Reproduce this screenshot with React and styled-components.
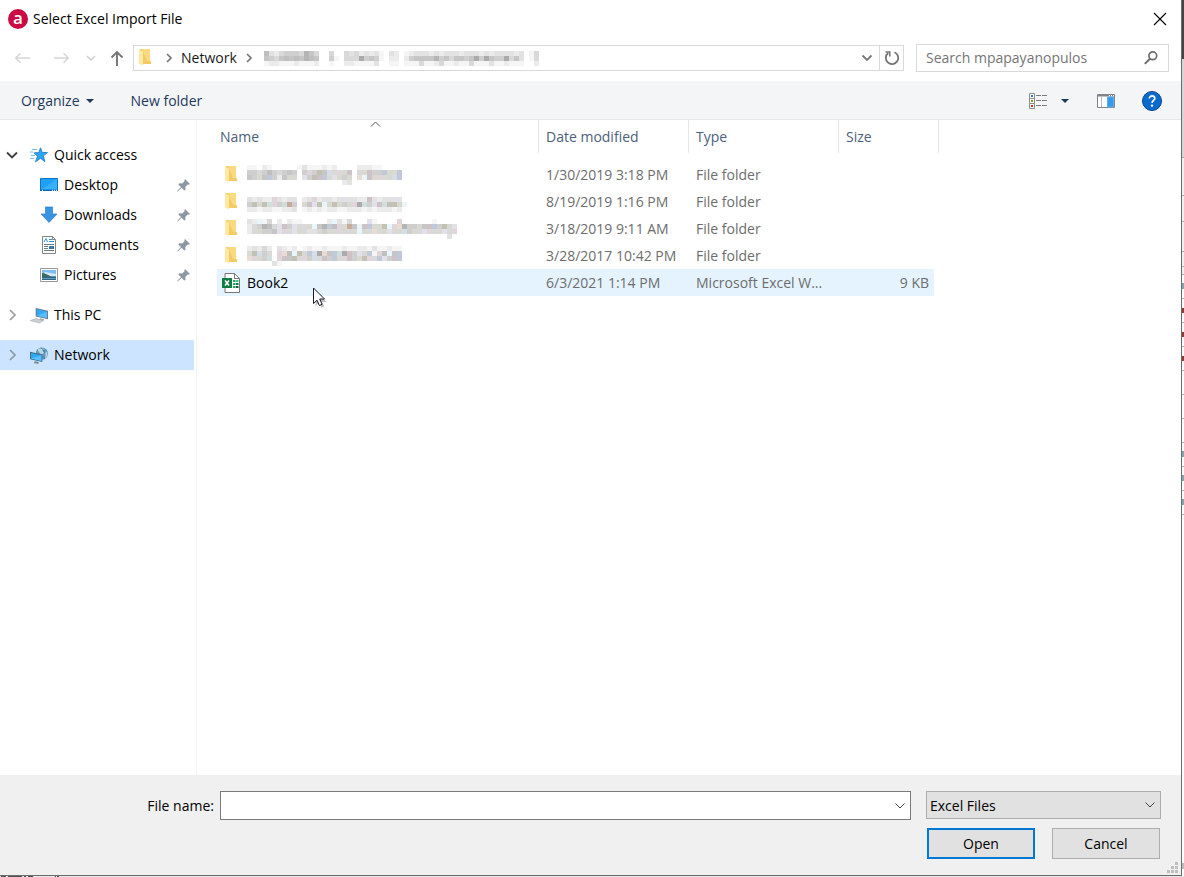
import { useState } from "react";
import styled, { createGlobalStyle } from "styled-components";

const GlobalStyle = createGlobalStyle`
  * {
    box-sizing: border-box;
  }

  body {
    margin: 0;
    background: #fff;
  }

  body, button, input, select, table {
    font-family: "Open Sans", "Noto Sans", sans-serif;
    font-size: 14px;
    line-height: 20px;
    color: #000;
  }

  button {
    border: 0;
    padding: 0;
    background: none;
  }

  svg {
    display: block;
    flex-shrink: 0;
  }
`;

const Screen = styled.div`
  display: grid;
  grid-template-columns: minmax(0, 1fr) 2px;
  grid-template-rows: 1fr 1px;
  min-height: 100vh;
`;

const Dialog = styled.div`
  display: flex;
  flex-direction: column;
  background: #fff;
  border-right: 1px solid #6b6b6b;
  border-bottom: 1px solid #6b6b6b;
`;

const RightEdge = styled.div`
  overflow: hidden;
  background: #fff;
`;

const BottomEdge = styled.div`
  grid-column: 1 / -1;
  overflow: hidden;
  background: #e6e6e6;
`;

const TitleBar = styled.header`
  display: flex;
  align-items: center;
  height: 35px;
  padding: 2px 14px 0 8px;

  h1 {
    flex: 1;
    margin: 0 0 0 5px;
    font-size: 14px;
    font-weight: 400;
  }
`;

const Logo = styled.span`
  display: flex;
  justify-content: center;
  width: 20px;
  height: 20px;
  border-radius: 50%;
  background: #cb0a44;
  color: #fff;
  font-weight: 600;
  font-size: 17px;
  line-height: 17px;
`;

const NavBar = styled.div`
  display: flex;
  align-items: center;
  height: 46px;
  padding: 0 12px 0 14px;
`;

const NavButtons = styled.div`
  display: flex;
  align-items: center;
  width: 119px;

  button:nth-child(2) {
    margin-left: 22px;
  }
  button:nth-child(3) {
    margin-left: 16px;
  }
  button:nth-child(4) {
    margin-left: 14px;
  }
`;

const AddressBar = styled.div`
  display: flex;
  align-items: stretch;
  flex: 1;
  min-width: 0;
  height: 26px;
  border: 1px solid #d9d9d9;
`;

const Crumbs = styled.nav`
  display: flex;
  align-items: center;
  flex: 1;
  min-width: 0;
  overflow: hidden;
  padding-left: 2px;

  a {
    color: #1a1a1a;
    text-decoration: none;
    margin: 0 9px;
  }
  svg + svg {
    margin-left: 12px;
  }
`;

const AddressButton = styled.button`
  display: flex;
  align-items: center;
  justify-content: center;
  width: 24px;
  border-left: ${({ $divided }) => ($divided ? "1px solid #d9d9d9" : "0")};
`;

const SearchBox = styled.label`
  display: flex;
  align-items: center;
  width: 253px;
  height: 28px;
  margin-left: 12px;
  padding: 0 10px 0 9px;
  border: 1px solid #d9d9d9;

  input {
    flex: 1;
    min-width: 0;
    padding: 0;
    border: 0;
    outline: 0;
  }
  input::placeholder {
    color: #757575;
    opacity: 1;
  }
`;

const CommandBar = styled.div`
  display: flex;
  align-items: center;
  height: 39px;
  padding: 1px 19px 0 21px;
  background: #f4f5f7;
  border-bottom: 1px solid #e6e7e9;
`;

const Command = styled.button`
  display: flex;
  align-items: center;
  gap: 6px;
  margin-right: ${({ $after }) => $after || 0}px;
  color: #1e395b;
`;

const Spacer = styled.div`
  flex: 1;
`;

const Main = styled.main`
  display: flex;
  flex: 1;
`;

const Sidebar = styled.nav`
  width: 197px;
  padding: 20px 2px 0 0;
  border-right: 1px solid #f3f3f3;
`;

const SideGroup = styled.div`
  margin-bottom: 10px;
`;

const SideItem = styled.a`
  display: flex;
  align-items: center;
  height: 30px;
  padding: 0 4px 0 ${({ $nested }) => ($nested ? 40 : 6)}px;
  background: ${({ $selected }) => ($selected ? "#cce4ff" : "transparent")};
  color: #000;
  text-decoration: none;

  span {
    flex: 1;
    margin-left: 6px;
  }
`;

const Arrow = styled.svg`
  margin-right: 12px;
`;

const FileArea = styled.section`
  flex: 1;
  min-width: 0;
  padding-left: 20px;
`;

const FileTable = styled.table`
  width: 722px;
  table-layout: fixed;
  border-collapse: separate;
  border-spacing: 0;

  th {
    position: relative;
    height: 33px;
    padding: 0 7px;
    border-right: 1px solid #e5e5e5;
    color: #4c607a;
    font-weight: 400;
    text-align: left;
  }
  th:first-child {
    padding-left: 3px;
  }
  thead::after {
    content: "";
    display: block;
    height: 8px;
  }
`;

const SortMark = styled.svg`
  position: absolute;
  top: 1px;
  left: 153px;
`;

const FileRow = styled.tr`
  background: ${({ $hover }) => ($hover ? "#e5f3ff" : "transparent")};

  td {
    height: 27px;
    padding: 0 7px;
    color: #6d6d6d;
    white-space: nowrap;
  }
  td:first-child {
    padding: 0 0 0 5px;
    color: #000;
  }
  td:nth-child(4) {
    padding-right: 5px;
    text-align: right;
  }
  td:last-child {
    padding: 0;
    background: #fff;
  }
`;

const FileName = styled.div`
  position: relative;
  display: flex;
  align-items: center;
  gap: 7px;
`;

const Pointer = styled.svg`
  position: absolute;
  left: 91px;
  top: 14px;
`;

const Footer = styled.footer`
  padding: 16px 20px;
  background: #f0f0f0;
`;

const FieldRow = styled.div`
  display: flex;
  align-items: flex-start;

  > label {
    width: 214px;
    margin: 5px 6px 0 -20px;
    text-align: right;
  }
`;

const ComboBox = styled.div`
  display: flex;
  flex: 1;
  min-width: 0;
  height: 29px;
  border: 1px solid #7a7a7a;
  background: #fff;

  input {
    flex: 1;
    min-width: 0;
    padding: 0 4px;
    border: 0;
    outline: 0;
    background: none;
  }
  button {
    padding: 0 4px;
  }
`;

const TypeSelect = styled.div`
  position: relative;
  width: 235px;
  margin-left: 15px;

  select {
    appearance: none;
    width: 100%;
    height: 28px;
    padding: 1px 24px 0 3px;
    border: 1px solid #adadad;
    border-radius: 0;
    background: #e1e1e1;
  }
  svg {
    position: absolute;
    top: 8px;
    right: 5px;
    pointer-events: none;
  }
`;

const Actions = styled.div`
  position: relative;
  display: flex;
  justify-content: flex-end;
  gap: 17px;
  margin-top: 8px;
  padding-right: 1px;
`;

const DialogButton = styled.button`
  width: 108px;
  height: 31px;
  border: ${({ $primary }) => ($primary ? "2px solid #0078d7" : "1px solid #adadad")};
  background: #e1e1e1;
`;

const Grip = styled.svg`
  position: absolute;
  right: -17px;
  bottom: -14px;
`;

const shades = {
  1: "#f5f5f5",
  2: "#ebebeb",
  3: "#e2e2e2",
  4: "#d9d9d9",
  5: "#cfcfcf",
  6: "#c6c6c6",
  7: "#bfbfbf",
  8: "#b5b5b5",
  9: "#ababab",
  p: "#dfd5da",
  q: "#cfc2c7",
  b: "#d5dde8",
  v: "#c0c8da",
  g: "#d8dad2",
  h: "#c3c1b4",
  t: "#d0dfdc",
  c: "#e8f5fa",
  o: "#eadcd3",
  r: "#c6ac9f",
  l: "#e2e0ea",
};

// pixelated name, one character per 5px cell
const Mosaic = ({ rows }) => (
  <svg width={rows[0].length * 5} height={rows.length * 5} shapeRendering="crispEdges" aria-hidden="true">
    {rows.map((row, y) =>
      [...row].map((c, x) =>
        shades[c] ? <rect key={`${x}-${y}`} x={x * 5} y={y * 5} width="5" height="5" fill={shades[c]} /> : null
      )
    )}
  </svg>
);

const pathMosaic = [
  "73245554864..4..43423231.32.123332323332333232333323.14",
  "65467676876..51.44495651.22.256666856466569596559463.14",
  "12211121112..1..2211113..11.111411241121141113112111..2",
];

const files = [
  {
    mosaic: [
      "11.21.....13111212....22211....",
      "5545754565.5p5h6b4pgq.4gq55vggv",
      "65g6v526gg.l5hqv43g5g.ocqgp4gbv",
      "...................23..........",
    ],
    date: "1/30/2019 3:18 PM",
    type: "File folder",
  },
  {
    mosaic: [
      "................................",
      "32322p3233.23p23323l3322q3233l3.",
      "5hghtp5tr5.gqlhcghg5gp9t5lqthhgc",
      "2212211223.12121221122212122212.",
    ],
    date: "8/19/2019 1:16 PM",
    type: "File folder",
  },
  {
    mosaic: [
      "32c14.2.211.....2c314...l1....p......1....",
      "245874lq5l44gc68v7pgr6cqvgghcpo855g6qv5hgl",
      "24g556lp4lg433g5g4pg4gcg4oggl4gb5g4lp4gl4p",
      "........................................3.",
    ],
    date: "3/18/2019 9:11 AM",
    type: "File folder",
  },
  {
    mosaic: [
      "23242.3212.12112111211221311211",
      "ghb54.po7chgvb9o6vt9q5lgv1p7c6v",
      "opg5t.pq6h4p5b4q5vgpq5ghp4vl5qv",
      ".....31........................",
    ],
    date: "3/28/2017 10:42 PM",
    type: "File folder",
  },
  { name: "Book2", date: "6/3/2021 1:14 PM", type: "Microsoft Excel W...", size: "9 KB" },
];

const FolderIcon = () => (
  <svg width="18" height="18" viewBox="0 0 18 18">
    <path d="M4 0h10v12l1 .5V15H4z" fill="#f3cb62" />
    <path d="M6 0h8v12h-3z" fill="#f9da80" />
    <path d="M3 .5l4 2V16.500L3 14.500z" fill="#ffe8a3" />
  </svg>
);

const ExcelIcon = () => (
  <svg width="18" height="20" viewBox="0 0 18 20">
    <path d="M3 .5h9.500l5 5v14H3z" fill="#fff" stroke="#777" />
    <path d="M12.500 .5v5h5" fill="none" stroke="#777" />
    <path d="M11 7h2.500v2H11zM11 10h2.500v2H11zM11 13h2.500v2H11z" fill="#21a366" />
    <path d="M14 7h2.500v2H14z" fill="#33c481" />
    <path d="M14 10h2.500v2H14z" fill="#107c41" />
    <path d="M14 13h2.500v2H14z" fill="#185c37" />
    <path d="M0 5h10v10H0z" fill="#107c41" />
    <path d="M3 7.500l4 5M7 7.500l-4 5" stroke="#fff" strokeWidth="1.600" />
  </svg>
);

const Chevron = () => (
  <svg width="6" height="10" viewBox="0 0 6 10" fill="none" stroke="#777" strokeWidth="1.700">
    <path d="M1 1l4 4-4 4" />
  </svg>
);

const DownChevron = ({ color = "#444", width = 1 }) => (
  <svg width="12" height="12" viewBox="0 0 12 12" fill="none" stroke={color} strokeWidth={width}>
    <path d="M1.500 3.500L6 8l4.500-4.500" />
  </svg>
);

const Caret = () => (
  <svg width="8" height="4" viewBox="0 0 8 4">
    <path d="M0 0h8L4 4z" fill="#1e395b" />
  </svg>
);

const PinIcon = () => (
  <svg width="13" height="13" viewBox="0 0 13 13">
    <path d="M8 0l5 5-1.500.7-.8-.3-2.400 2.500.2 2.800-1.200.8-2.700-2.800L.7 12.500l-.5-.5L4 8 1.300 5.500l1-1.200 2.900.2L7.700 2.100l-.4-.9z" fill="#8b98a3" />
  </svg>
);

const StarIcon = () => (
  <svg width="18" height="17" viewBox="0 0 18 17">
    <path d="M10.500.8l1.800 4.700 5.200.1-4.200 3.200 1.700 5.700-4.600-3.100-4.900 3.400 1.900-5.500L4 5.800l4.800-.2z" fill="#2da4f5" stroke="#1878c8" strokeWidth=".8" />
    <path d="M2 2.500h5M0 5h3M1 8.500h4M0 11.500h4" stroke="#77bdec" />
  </svg>
);

const DesktopIcon = () => (
  <svg width="18" height="14" viewBox="0 0 18 14">
    <path d="M.5.5h17v12H.5z" fill="#1fa1fb" stroke="#0c74c4" />
    <path d="M1 12L17 1v11z" fill="#38b1ff" />
    <path d="M0 11.500h18V13H0z" fill="#0c69b5" />
    <path d="M2 12.300h1M12 12.300h1M14 12.300h1M16 12.300h1" stroke="#fff" />
  </svg>
);

const DownloadIcon = () => (
  <svg width="18" height="18" viewBox="0 0 18 18">
    <path d="M5.500 1h7v7H17l-8 8.500L1.200 8h4.300z" fill="#3994e4" stroke="#2b7ccc" strokeWidth=".7" />
  </svg>
);

const DocumentIcon = () => (
  <svg width="18" height="18" viewBox="0 0 18 18">
    <path d="M2.500.5h10l3 3v14h-13z" fill="#fff" stroke="#858585" />
    <path d="M12.500.5v3h3" fill="none" stroke="#858585" />
    <path d="M4 6l2-3.500L7.500 6M9 3.500h3M9 5.500h5" fill="none" stroke="#2d8fdb" />
    <path d="M4 8.500h10M4 10.500h4M4 12.500h4M4 14.500h10" stroke="#6c7780" />
    <path d="M9 10h5v3H9z" fill="#3a77b0" />
  </svg>
);

const PictureIcon = () => (
  <svg width="18" height="14" viewBox="0 0 18 14">
    <path d="M.5.5h17v13H.5z" fill="#fff" stroke="#979797" />
    <path d="M2 2h14v10H2z" fill="#7dbdf0" />
    <path d="M5 4l11 2v2H2V6z" fill="#d5eaf5" />
    <path d="M2 5c3 0 6 2 9 3.500h5V9H2z" fill="#3a6c61" />
    <path d="M2 9h14v3H2z" fill="#2d6487" />
    <path d="M2 10.500h14" stroke="#76a8c4" strokeWidth=".8" />
  </svg>
);

const ComputerIcon = () => (
  <svg width="18" height="17" viewBox="0 0 19 18">
    <path d="M6 1l13 3v9L6 10z" fill="#6d7880" />
    <path d="M7 2.200l11 2.600v7L7 9.200z" fill="#2fa8f5" />
    <path d="M7 9.200L18 4.800v7z" fill="#57bdfc" />
    <path d="M11 12l4 1-1 2-5-1z" fill="#a3abb0" />
    <path d="M0 14.500L6 12l8 2.500-4 2.500z" fill="#c9cfd2" stroke="#a6adb1" strokeWidth=".5" />
  </svg>
);

const NetworkIcon = () => (
  <svg width="18" height="17" viewBox="0 0 19 18">
    <circle cx="12.500" cy="7" r="6.500" fill="#5f9ac0" />
    <path d="M8 3c2-2 5-2 7-1l-2 2 2 2-3 2-2-2zM15 7l3-2c1 3 0 6-2 7z" fill="#b9d5df" />
    <path d="M11 1c4 1 6 6 4 12" fill="none" stroke="#3b7198" strokeWidth=".8" />
    <path d="M0 5l13 3v8L0 13z" fill="#456b86" />
    <path d="M1 6.300l11 2.500v6L1 12.200z" fill="#2ca8f5" />
    <path d="M1 12.200l11-3.400v6z" fill="#59c0fc" />
    <path d="M5 15l4 1v2l-5-1z" fill="#7d878d" />
  </svg>
);

const places = [
  { name: "Desktop", icon: <DesktopIcon /> },
  { name: "Downloads", icon: <DownloadIcon /> },
  { name: "Documents", icon: <DocumentIcon /> },
  { name: "Pictures", icon: <PictureIcon /> },
];

const edgeLines = [157, 195, 221, 251, 266, 274, 298, 322, 346, 370, 394, 418, 442, 466, 490, 514];

const App = () => {
  const [fileName, setFileName] = useState("");

  return (
    <Screen>
      <GlobalStyle />
      <Dialog role="dialog" aria-labelledby="title">
        <TitleBar>
          <Logo aria-hidden="true">a</Logo>
          <h1 id="title">Select Excel Import File</h1>
          <button aria-label="Close">
            <svg width="14" height="14" viewBox="0 0 14 14" stroke="#000" strokeWidth="1.100">
              <path d="M1 1l12 12M13 1L1 13" />
            </svg>
          </button>
        </TitleBar>

        <NavBar>
          <NavButtons>
            <button aria-label="Back">
              <svg width="17" height="12" viewBox="0 0 17 12" fill="none" stroke="#d6d6d6" strokeWidth="1.500">
                <path d="M16 6H2M6.500 1.200L1.700 6l4.800 4.800" />
              </svg>
            </button>
            <button aria-label="Forward">
              <svg width="17" height="12" viewBox="0 0 17 12" fill="none" stroke="#d6d6d6" strokeWidth="1.500">
                <path d="M1 6h14M10.500 1.200L15.300 6l-4.800 4.800" />
              </svg>
            </button>
            <button aria-label="Recent locations">
              <svg width="10" height="6" viewBox="0 0 10 6" fill="none" stroke="#d0d0d0" strokeWidth="1.500">
                <path d="M1 1l4 4 4-4" />
              </svg>
            </button>
            <button aria-label="Up">
              <svg width="14" height="16" viewBox="0 0 14 16" fill="none" stroke="#747474" strokeWidth="1.900">
                <path d="M7 16V2M1.500 7.500L7 2l5.500 5.500" />
              </svg>
            </button>
          </NavButtons>

          <AddressBar>
            <Crumbs aria-label="Address">
              <FolderIcon />
              <Chevron />
              <a href="#network">Network</a>
              <Chevron />
              <Mosaic rows={pathMosaic} />
            </Crumbs>
            <AddressButton aria-label="Previous locations">
              <DownChevron color="#777" width={1.8} />
            </AddressButton>
            <AddressButton $divided aria-label="Refresh">
              <svg width="16" height="16" viewBox="0 0 16 16" fill="none" stroke="#747474" strokeWidth="1.800">
                <path d="M10.500 2.200A6.200 6.200 0 1 1 4.200 3" />
                <path d="M1.500 2h4.300v4.500" strokeWidth="1.500" />
              </svg>
            </AddressButton>
          </AddressBar>

          <SearchBox>
            <input type="text" aria-label="Search" placeholder="Search mpapayanopulos" />
            <svg width="14" height="14" viewBox="0 0 14 14" fill="none" stroke="#6f6f6f">
              <circle cx="8.800" cy="4.800" r="3.900" strokeWidth="1.700" />
              <path d="M6 7.700L.8 12.900" strokeWidth="2" />
            </svg>
          </SearchBox>
        </NavBar>

        <CommandBar>
          <Command $after={37}>
            Organize <Caret />
          </Command>
          <Command>New folder</Command>
          <Spacer />
          <Command $after={27} aria-label="Change your view">
            <svg width="19" height="16" viewBox="0 0 19 16">
              <path d="M.5.500h5v5h-5zM.5 5.500h5v5h-5zM.5 10.500h5v5h-5z" fill="#fff" stroke="#8d8d8d" />
              <path d="M2 2h2v2H2z" fill="#2d7dc5" />
              <path d="M2 7h2v2H2z" fill="#7c9b2c" />
              <path d="M2 12h2v2H2z" fill="#cf3e24" />
              <path d="M7 2.500h5M13 2.500h5M7 7.500h5M13 7.500h5M7 12.500h5M13 12.500h5" stroke="#7d7d7d" />
            </svg>
            <svg width="16" height="4" viewBox="0 0 16 4">
              <path d="M7 0h8l-4 4z" fill="#1e395b" />
            </svg>
          </Command>
          <Command $after={27} aria-label="Show the preview pane">
            <svg width="18" height="14" viewBox="0 0 18 14">
              <path d="M.5.500h17v13H.5z" fill="#fff" stroke="#7f858b" />
              <path d="M1 1.500h16" stroke="#7f858b" strokeWidth="2" />
              <path d="M12 1.500h1M14 1.500h1M16 1.500h1" stroke="#fff" />
              <path d="M4.500 2v11" stroke="#bcbcbc" />
              <path d="M10.500 3h6v10h-6z" fill="#3b9ae8" stroke="#57b0f5" />
            </svg>
          </Command>
          <Command aria-label="Get help">
            <svg width="20" height="20" viewBox="0 0 20 20">
              <circle cx="10" cy="10" r="9.500" fill="#0a6bce" stroke="#08478d" />
              <path d="M7.300 7.600c0-3.700 5.700-3.500 5.500-.2-.1 2-2.700 2.200-2.700 4.600" fill="none" stroke="#fff" strokeWidth="1.700" />
              <circle cx="10" cy="14.600" r="1.200" fill="#fff" />
            </svg>
          </Command>
        </CommandBar>

        <Main>
          <Sidebar aria-label="Places">
            <SideGroup>
              <SideItem href="#quick">
                <Arrow width="12" height="12" viewBox="0 0 12 12" fill="none" stroke="#404040" strokeWidth="1.900">
                  <path d="M1 3.500l5 5 5-5" />
                </Arrow>
                <StarIcon />
                <span>Quick access</span>
              </SideItem>
              {places.map((place) => (
                <SideItem key={place.name} href={`#${place.name}`} $nested>
                  {place.icon}
                  <span>{place.name}</span>
                  <PinIcon />
                </SideItem>
              ))}
            </SideGroup>
            <SideGroup>
              <SideItem href="#pc">
                <Arrow width="12" height="12" viewBox="0 0 12 12" fill="none" stroke="#9c9c9c" strokeWidth="1.700">
                  <path d="M4 1l5 5-5 5" />
                </Arrow>
                <ComputerIcon />
                <span>This PC</span>
              </SideItem>
            </SideGroup>
            <SideItem href="#network" $selected>
              <Arrow width="12" height="12" viewBox="0 0 12 12" fill="none" stroke="#8c98a4" strokeWidth="1.700">
                <path d="M4 1l5 5-5 5" />
              </Arrow>
              <NetworkIcon />
              <span>Network</span>
            </SideItem>
          </Sidebar>

          <FileArea>
            <FileTable>
              <colgroup>
                <col width="322" />
                <col width="150" />
                <col width="150" />
                <col width="95" />
                <col width="5" />
              </colgroup>
              <thead>
                <tr>
                  <th>
                    Name
                    <SortMark width="11" height="6" viewBox="0 0 11 6" fill="none" stroke="#555">
                      <path d="M1 5.500L5.500 1 10 5.500" />
                    </SortMark>
                  </th>
                  <th>Date modified</th>
                  <th>Type</th>
                  <th colSpan={2}>Size</th>
                </tr>
              </thead>
              <tbody>
                {files.map((file) => (
                  <FileRow key={file.date} $hover={Boolean(file.name)}>
                    <td>
                      <FileName>
                        {file.name ? <ExcelIcon /> : <FolderIcon />}
                        {file.name || <Mosaic rows={file.mosaic} />}
                        {file.name && (
                          <Pointer width="14" height="21" viewBox="0 0 14 21">
                            <path d="M2.500 3v16l3.500-3 2.300 4.500 3-1.200L9 15h4.500z" fill="#000" opacity=".25" />
                            <path d="M.5 1v15.500L4 13.200l2.400 5.300 2.700-1.200L6.700 12h4.800z" fill="#fff" stroke="#1b1b2b" />
                          </Pointer>
                        )}
                      </FileName>
                    </td>
                    <td>{file.date}</td>
                    <td>{file.type}</td>
                    <td>{file.size}</td>
                    <td />
                  </FileRow>
                ))}
              </tbody>
            </FileTable>
          </FileArea>
        </Main>

        <Footer>
          <FieldRow>
            <label htmlFor="file-name">File name:</label>
            <ComboBox>
              <input id="file-name" type="text" value={fileName} onChange={(e) => setFileName(e.target.value)} />
              <button aria-label="Recent files">
                <DownChevron />
              </button>
            </ComboBox>
            <TypeSelect>
              <select aria-label="File type">
                <option>Excel Files</option>
              </select>
              <DownChevron />
            </TypeSelect>
          </FieldRow>
          <Actions>
            <DialogButton $primary>Open</DialogButton>
            <DialogButton>Cancel</DialogButton>
            <Grip width="11" height="11" viewBox="0 0 11 11" fill="#bfbfbf">
              <path d="M8 0h3v3H8zM4 4h3v3H4zM8 4h3v3H8zM0 8h3v3H0zM4 8h3v3H4zM8 8h3v3H8z" />
            </Grip>
          </Actions>
        </Footer>
      </Dialog>

      <RightEdge aria-hidden="true">
        <svg width="2" height="876" shapeRendering="crispEdges">
          <rect width="2" height="59" fill="#444" />
          <rect y="59" width="2" height="98" fill="#d6d6d6" />
          <rect y="157" width="2" height="117" fill="#f0f0f0" />
          {edgeLines.map((y) => (
            <rect key={y} y={y} width="2" height="1" fill="#aaa" />
          ))}
          {[308, 332, 356].map((y) => (
            <rect key={y} y={y} width="2" height="5" fill="#8a3b2c" />
          ))}
          {[283, 451, 475, 499].map((y) => (
            <rect key={y} y={y} width="2" height="6" fill="#7fa6a8" />
          ))}
          <rect y="863" width="2" height="6" fill="#bbb" />
        </svg>
      </RightEdge>
      <BottomEdge aria-hidden="true">
        <svg width="60" height="1" shapeRendering="crispEdges" fill="#555">
          <path d="M1 0h5v1H1zM8 0h14v1H8zM24 0h2v1h-2zM28 0h5v1h-5zM55 0h1v1h-1zM57 0h2v1h-2z" />
        </svg>
      </BottomEdge>
    </Screen>
  );
};

export default App;
